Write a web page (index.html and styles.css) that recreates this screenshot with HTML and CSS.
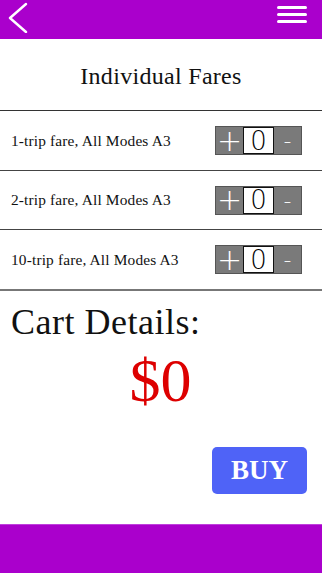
FILE: index.html
```html
<!DOCTYPE html>
<html>
<head>
<meta charset="utf-8">
<link rel="stylesheet" href="styles.css">
</head>
<body>
<div class="app">
  <header class="topbar">
    <svg class="back" width="24" height="32" viewBox="0 0 24 32"><polyline points="19,3 3,17 19,31" fill="none" stroke="#fff" stroke-width="2.4" stroke-linecap="round" stroke-linejoin="round"/></svg>
    <svg class="menu" width="30" height="24" viewBox="0 0 30 24"><rect x="0" y="5" width="30" height="3" rx="1.5" fill="#fff"/><rect x="0" y="12" width="30" height="3" rx="1.5" fill="#fff"/><rect x="0" y="19" width="30" height="3" rx="1.5" fill="#fff"/></svg>
  </header>
  <main class="content">
    <h1 class="title">Individual Fares</h1>
    <div class="fares">
      <div class="fare">
        <span class="fare-name">1-trip fare, All Modes A3</span>
        <div class="stepper"><span class="step plus">+</span><span class="count">0</span><span class="step minus">-</span></div>
      </div>
      <div class="fare">
        <span class="fare-name">2-trip fare, All Modes A3</span>
        <div class="stepper"><span class="step plus">+</span><span class="count">0</span><span class="step minus">-</span></div>
      </div>
      <div class="fare">
        <span class="fare-name">10-trip fare, All Modes A3</span>
        <div class="stepper"><span class="step plus">+</span><span class="count">0</span><span class="step minus">-</span></div>
      </div>
    </div>
    <section class="cart">
      <h2 class="cart-title">Cart Details:</h2>
      <div class="total">$0</div>
      <div class="actions"><button class="buy">BUY</button></div>
    </section>
  </main>
  <footer class="bottombar"></footer>
</div>
</body>
</html>
```
FILE: styles.css
```css
html, body {
  margin: 0;
  padding: 0;
  background: #fff;
}
.app {
  width: 322px;
  height: 573px;
  display: flex;
  flex-direction: column;
  font-family: "Liberation Serif", "DejaVu Serif", serif;
  color: #111;
}
.topbar {
  height: 39px;
  background: #aa00cc;
  display: flex;
  justify-content: space-between;
  align-items: flex-start;
  padding: 0 15px 0 7px;
  box-sizing: border-box;
}
.back {
  margin-top: 1px;
}
.menu {
  margin-top: 1px;
}
.content {
  flex: 1;
  display: flex;
  flex-direction: column;
}
.title {
  margin: 0;
  height: 72px;
  display: flex;
  align-items: center;
  justify-content: center;
  font-weight: normal;
  font-size: 24px;
  letter-spacing: 0.3px;
  padding-top: 4px;
  box-sizing: border-box;
  border-bottom: 1px solid #333;
}
.fare {
  height: 59px;
  display: flex;
  align-items: center;
  justify-content: space-between;
  padding: 0 20px 0 11px;
  border-bottom: 1px solid #444;
}
.fare:nth-child(2) {
  height: 58px;
}
.fare:last-child {
  border-bottom: 2px solid #777;
}
.fare-name {
  font-size: 15.4px;
  letter-spacing: 0.15px;
}
.stepper {
  display: flex;
  height: 29px;
  border: 1px solid #555;
  box-sizing: border-box;
  background: #7a7a7a;
}
.step {
  width: 27px;
  color: #fff;
  display: flex;
  align-items: center;
  justify-content: center;
  font-family: "DejaVu Sans", sans-serif;
  font-weight: 300;
}
.plus {
  font-size: 30px;
  line-height: 1;
}
.minus {
  font-size: 22px;
}
.count {
  width: 31px;
  background: #fff;
  border: 1px solid #111;
  box-sizing: border-box;
  display: flex;
  align-items: center;
  justify-content: center;
  font-family: "DejaVu Sans", sans-serif;
  font-weight: 200;
  font-size: 26px;
  color: #000;
}
.cart {
  padding: 0 14px 0 11px;
  display: flex;
  flex-direction: column;
}
.cart-title {
  margin: 10px 0 0;
  font-weight: normal;
  font-size: 36px;
  letter-spacing: 0.5px;
  line-height: 42px;
}
.total {
  text-align: center;
  color: #dd0000;
  font-size: 62px;
  line-height: 66px;
  margin-top: 4px;
  padding-left: 2px;
}
.actions {
  display: flex;
  justify-content: flex-end;
  margin-top: 34px;
  padding-right: 1px;
}
.buy {
  width: 95px;
  height: 47px;
  border: none;
  border-radius: 5px;
  background: #4f63f7;
  color: #fff;
  font-family: "Liberation Serif", "DejaVu Serif", serif;
  font-weight: bold;
  font-size: 27px;
  padding: 0;
}
.bottombar {
  height: 49px;
  background: #aa00cc;
  border-top: 1px solid #c040dd;
  box-sizing: border-box;
}
```
